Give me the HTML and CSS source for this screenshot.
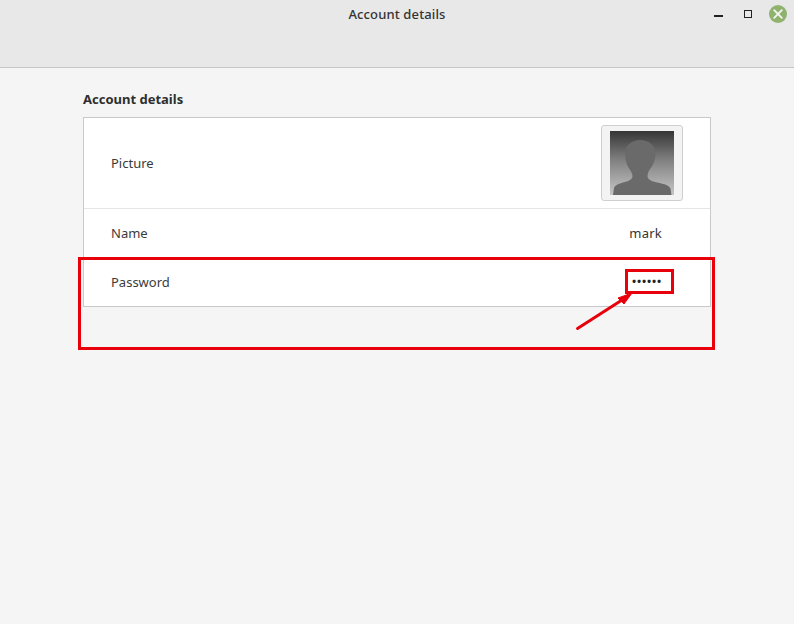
FILE: index.html
```html
<!DOCTYPE html>
<html lang="en">
<head>
<meta charset="utf-8">
<title>Account details</title>
<link rel="stylesheet" href="styles.css">
</head>
<body>
<header class="titlebar">
  <div class="title">Account details</div>
  <div class="controls">
    <span class="min"></span>
    <span class="max"></span>
    <span class="close">
      <svg viewBox="0 0 18 18" width="18" height="18"><path d="M5.2 5.2 12.8 12.8M12.8 5.2 5.2 12.8" stroke="#f2f6ee" stroke-width="1.9" stroke-linecap="round" fill="none"/></svg>
    </span>
  </div>
</header>
<main class="content">
  <h1 class="heading">Account details</h1>
  <section class="card">
    <div class="row row-picture">
      <span class="label">Picture</span>
      <button class="avatar-btn" type="button">
        <svg class="avatar" viewBox="0 0 64 64" width="64" height="64">
          <defs>
            <linearGradient id="bg" x1="0" y1="0" x2="0" y2="1">
              <stop offset="0" stop-color="#363636"/>
              <stop offset="0.45" stop-color="#808080"/>
              <stop offset="1" stop-color="#c6c6c6"/>
            </linearGradient>
          </defs>
          <rect width="64" height="64" fill="url(#bg)"/>
          <path d="M3 64 4 57C5 54 9 52.500 15 51 19 50 22 48.500 22.500 45.500 22.500 43 21.500 41 19.500 38 17 34.500 15 29 15 23 15 14 22 9 30 9 38.500 9 45.500 14 45.500 23 45.500 29 43 34.500 40 38 38 41 37.500 43 37.500 45.500 38 48.500 41 50 45 51 51 52.500 59 53.500 60.500 57.500L61.500 64Z" fill="#6a6a6a"/>
        </svg>
      </button>
    </div>
    <div class="row row-name">
      <span class="label">Name</span>
      <span class="value value-name">mark</span>
    </div>
    <div class="row row-password">
      <span class="label">Password</span>
      <span class="value value-password">••••••</span>
    </div>
  </section>
</main>
<div class="mark mark-outer"></div>
<div class="mark mark-inner"></div>
<svg class="mark-arrow" viewBox="0 0 70 50" width="70" height="50">
  <path d="M5.500 37.500 50 9" stroke="#e8000b" stroke-width="3" stroke-linecap="round" fill="none"/>
  <path d="M60 2 46 7 52 13Z" fill="#e8000b" stroke="#e8000b" stroke-width="1"/>
</svg>
</body>
</html>
```

FILE: styles.css
```css
* { box-sizing: border-box; }
html, body { margin: 0; height: 100%; }
body {
  position: relative;
  width: 794px;
  height: 624px;
  overflow: hidden;
  background: #f5f5f5;
  color: #3b3b3b;
  font-family: "Noto Sans", "Open Sans", sans-serif;
  font-size: 13px;
}
.titlebar {
  position: relative;
  height: 68px;
  background: #e8e8e8;
  border-bottom: 1px solid #c6c6c6;
  display: flex;
  justify-content: center;
}
.title {
  margin-top: 5px;
  line-height: 18px;
  font-weight: 500;
  font-size: 13px;
  letter-spacing: 0.13px;
  color: #333;
}
.controls {
  position: absolute;
  top: 5px;
  right: 7px;
  display: flex;
  align-items: center;
  gap: 14px;
}
.min { width: 9px; height: 2px; background: #222; margin-top: 3px; margin-right: -3px; }
.max { width: 8px; height: 8px; border: 1.500px solid #222; margin-left: 10px; margin-right: 3px; }
.close {
  width: 18px;
  height: 18px;
  border-radius: 50%;
  background: #8fb26f;
  display: block;
}
.close svg { display: block; }
.content { padding: 22px 83px 0; }
.heading {
  margin: 0 0 8px;
  line-height: 19px;
  font-size: 13px;
  font-weight: 700;
  color: #2e2e2e;
}
.card {
  width: 628px;
  height: 190px;
  background: #fff;
  border: 1px solid #c9c9c9;
  display: flex;
  flex-direction: column;
}
.row {
  display: flex;
  align-items: center;
  justify-content: space-between;
  padding: 0 27px;
}
.row-picture { height: 91px; border-bottom: 1px solid #e6e6e6; }
.row-name { height: 49px; padding-bottom: 2px; }
.row-password { height: 48px; }
.label { line-height: 18px; }
.avatar-btn {
  width: 82px;
  height: 76px;
  margin: 0;
  padding: 0;
  background: #f3f3f3;
  border: 1px solid #cfcfcf;
  border-radius: 3px;
  display: flex;
  align-items: center;
  justify-content: center;
}
.avatar { display: block; }
.value-name { margin-right: 21px; letter-spacing: 0.25px; color: #333; }
.value-password {
  margin-right: 21px;
  color: #222;
  font-weight: 700;
  font-size: 11px;
  letter-spacing: 0.85px;
  position: relative;
  top: -2px;
}
.mark { position: absolute; border: 3px solid #e8000b; }
.mark-outer { left: 78px; top: 257px; width: 637px; height: 93px; }
.mark-inner { left: 625px; top: 269px; width: 49px; height: 25px; }
.mark-arrow { position: absolute; left: 572px; top: 291px; }
```
